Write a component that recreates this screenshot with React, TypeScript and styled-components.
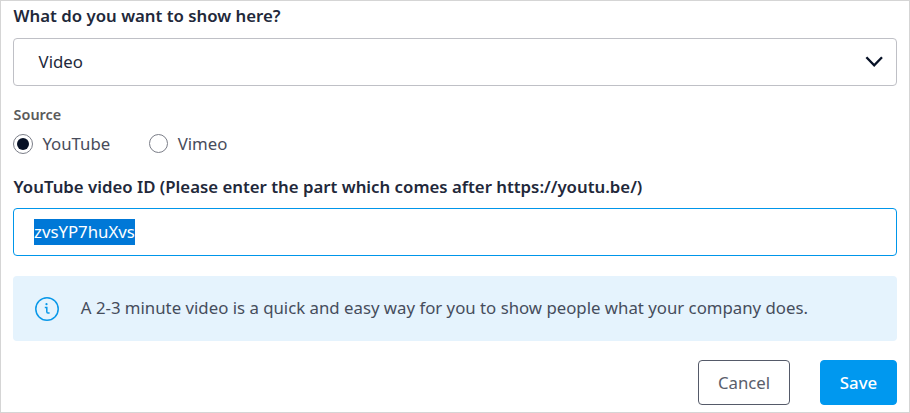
import React from "react";
import styled, { createGlobalStyle } from "styled-components";

const GlobalStyle = createGlobalStyle`
  *, *::before, *::after { box-sizing: border-box; }
  body {
    margin: 0;
    background: #fff;
    font-family: "Noto Sans", "Open Sans", sans-serif;
    font-size: 16.8px;
  }
`;

const Panel = styled.form`
  display: flex;
  flex-direction: column;
  width: 910px;
  height: 413px;
  padding: 3px 12px 0;
  border: 1px solid #d5d5d5;
  overflow: hidden;
`;

const FieldLabel = styled.div`
  height: 24px;
  padding-left: 0.6px;
  line-height: 24px;
  font-weight: 600;
  color: #22283a;
  white-space: nowrap;
`;

const Field = styled.div<{ $focused?: boolean; $inset: number }>`
  display: flex;
  align-items: center;
  flex: none;
  height: 48px;
  padding: 0 13px 0 ${(p) => p.$inset}px;
  border: 1px solid ${(p) => (p.$focused ? "#0096ea" : "#bfc0c6")};
  border-radius: 4px;
  line-height: 26px;
  color: #22283a;
`;

const SelectField = styled(Field)`
  justify-content: space-between;
  margin-top: 10px;
`;

const InputField = styled(Field)`
  margin-top: 9px;
`;

const Selected = styled.span`
  height: 26px;
  background: #0078d7;
  color: #fff;
`;

const SourceLabel = styled.div`
  height: 20px;
  margin-top: 19px;
  padding-left: 0.6px;
  line-height: 20px;
  font-size: 14.4px;
  font-weight: 600;
  color: #5a5a5a;
`;

const RadioGroup = styled.div`
  display: flex;
  gap: 39px;
  height: 24px;
  margin: 7px 0 19px;
`;

const RadioOption = styled.label`
  display: flex;
  align-items: center;
  gap: 9.4px;
  line-height: 24px;
  color: #484c5b;
`;

const RadioMark = styled.span<{ $checked?: boolean }>`
  display: grid;
  place-items: center;
  width: ${(p) => (p.$checked ? 20 : 19)}px;
  height: ${(p) => (p.$checked ? 20 : 19)}px;
  margin-bottom: 1px;
  border: 1px solid #7b7e88;
  border-radius: 50%;
  &::after {
    content: "";
    width: 12px;
    height: 12px;
    border-radius: 50%;
    background: ${(p) => (p.$checked ? "#071126" : "transparent")};
  }
`;

const InfoBox = styled.div`
  display: flex;
  align-items: center;
  flex: none;
  gap: 21.8px;
  height: 65px;
  margin-top: 20px;
  padding-left: 22px;
  border-radius: 4px;
  background: #e5f3fd;
  color: #454d5c;
`;

const InfoText = styled.span`
  padding-bottom: 2px;
`;

const Actions = styled.div`
  display: flex;
  justify-content: flex-end;
  gap: 30px;
  margin-top: 19px;
`;

const Button = styled.button<{ $primary?: boolean }>`
  width: ${(p) => (p.$primary ? 77 : 92)}px;
  height: 45px;
  padding: 0;
  border: 1px solid ${(p) => (p.$primary ? "#0098ef" : "#555a69")};
  border-radius: 4px;
  background: ${(p) => (p.$primary ? "#0098ef" : "#fff")};
  color: ${(p) => (p.$primary ? "#fff" : "#5a5e6b")};
  font: inherit;
  font-weight: ${(p) => (p.$primary ? 500 : 400)};
`;

const Chevron = () => (
  <svg width="18" height="12" viewBox="0 0 18 12" fill="none">
    <path d="M1.4 1.2 9.2 9.4 17 1.2" stroke="#071126" strokeWidth="2.3" />
  </svg>
);

const InfoIcon = () => (
  <svg width="24" height="24" viewBox="0 0 24 24" fill="none" stroke="#0998e9" strokeWidth="1.5">
    <circle cx="12" cy="12" r="11.2" />
    <path d="M9.8 10.4h2v4.4q0 1.3 1.2 1.3h1.6" />
    <circle cx="11.5" cy="7.2" r="1.1" fill="#0998e9" stroke="none" />
  </svg>
);

export default function App() {
  return (
    <>
      <GlobalStyle />
      <Panel>
        <FieldLabel>What do you want to show here?</FieldLabel>
        <SelectField $inset={24.6}>
          <span>Video</span>
          <Chevron />
        </SelectField>
        <SourceLabel>Source</SourceLabel>
        <RadioGroup>
          <RadioOption>
            <RadioMark $checked />
            <span>YouTube</span>
          </RadioOption>
          <RadioOption>
            <RadioMark />
            <span>Vimeo</span>
          </RadioOption>
        </RadioGroup>
        <FieldLabel>YouTube video ID (Please enter the part which comes after https://youtu.be/)</FieldLabel>
        <InputField $focused $inset={20}>
          <Selected>zvsYP7huXvs</Selected>
        </InputField>
        <InfoBox>
          <InfoIcon />
          <InfoText>A 2-3 minute video is a quick and easy way for you to show people what your company does.</InfoText>
        </InfoBox>
        <Actions>
          <Button type="button">Cancel</Button>
          <Button type="button" $primary>Save</Button>
        </Actions>
      </Panel>
    </>
  );
}
